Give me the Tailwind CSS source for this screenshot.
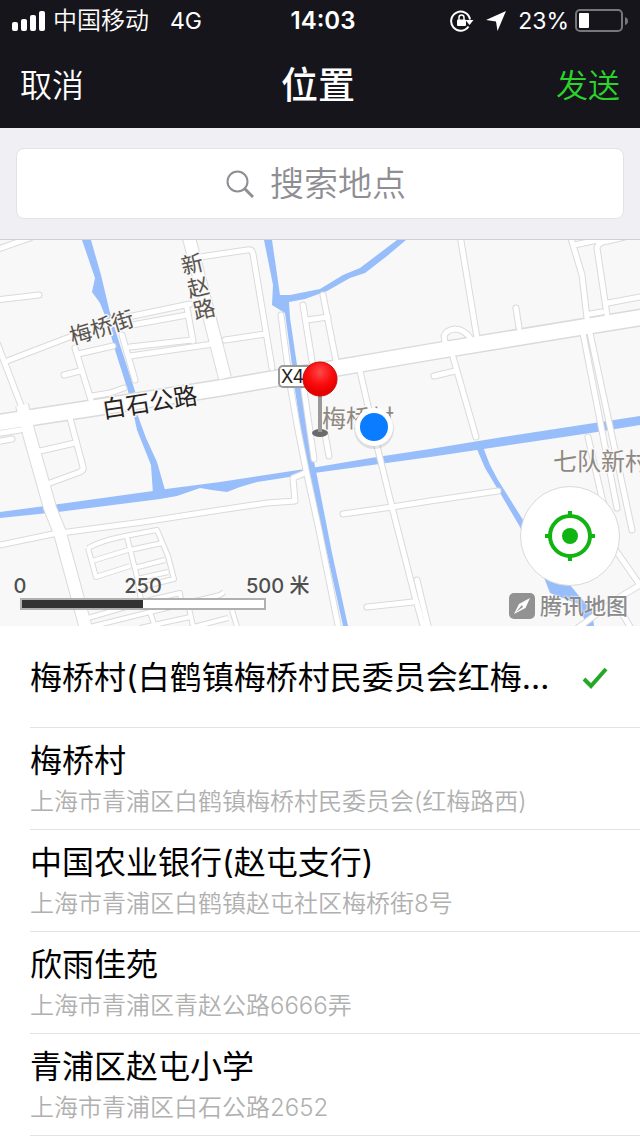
<!DOCTYPE html>
<html lang="zh-CN">
  <head>
    <meta charset="UTF-8" />
    <meta name="viewport" content="width=device-width, initial-scale=1.0" />
    <title>位置</title>
    <script src="https://cdn.jsdelivr.net/npm/@tailwindcss/browser@4"></script>
  </head>
  <body class="bg-white font-['Inter','Noto_Sans_CJK_SC',sans-serif] text-black">
    <header class="bg-[#16151b] text-white">
      <!-- Status bar -->
      <div class="grid h-10 grid-cols-[1fr_auto_1fr] items-center px-3 pt-0.5 text-2xl">
        <div class="flex items-center gap-[7px]">
          <svg class="h-5 w-[34px]" viewBox="0 0 34 20" fill="currentColor">
            <rect x="0" y="11" width="6" height="9" rx="2" />
            <rect x="9" y="8" width="6" height="12" rx="2" />
            <rect x="18" y="4" width="6" height="16" rx="2" />
            <rect x="27" y="0" width="6" height="20" rx="2" />
          </svg>
          <span class="font-[350]">中国移动</span>
          <span class="pl-3.5 text-[23px]">4G</span>
        </div>
        <time class="pl-1.5 font-semibold">14:03</time>
        <div class="flex items-center justify-end">
          <svg class="h-6 w-6 shrink-0" viewBox="0 0 24 24" fill="none" stroke="currentColor" stroke-width="2">
            <path d="M18.500 17.500A9.500 9.500 0 1 1 20 10.500" />
            <path d="M15.500 11h8l-4 5z" fill="currentColor" stroke="none" />
            <rect x="7" y="10.500" width="9" height="6.500" rx="1" fill="currentColor" stroke="none" />
            <path d="M9 11V8.500a2.500 2.500 0 0 1 5 0V11" stroke-width="1.500" />
          </svg>
          <svg class="ml-3 size-5 shrink-0" viewBox="0 0 20 20" fill="currentColor">
            <path d="M20 0L11.500 20L10 10.500L0 9z" />
          </svg>
          <span class="ml-3 text-[23px]">23%</span>
          <svg class="ml-1.5 h-6 w-[53px] shrink-0" viewBox="0 0 53 24" fill="none">
            <rect x="1" y="1" width="46" height="21" rx="4" stroke="#77767b" stroke-width="2" />
            <rect x="4" y="4" width="10" height="15" rx="1" fill="#fff" />
            <path d="M50 8q3 1 3 4t-3 4z" fill="#77767b" />
          </svg>
        </div>
      </div>

      <!-- Title bar -->
      <div class="grid h-[88px] grid-cols-[1fr_auto_1fr] items-center px-5 pt-1">
        <button class="justify-self-start text-[32px] font-[350]">取消</button>
        <h1 class="-ml-1 text-[37px] font-medium">位置</h1>
        <button class="justify-self-end text-[32px] font-[350] text-[#2bd32b]">发送</button>
      </div>
    </header>

    <!-- Search -->
    <div class="border-b border-[#cfcfd8] bg-[#efeff4] px-4 pt-5 pb-5">
      <label for="search" class="flex h-[71px] items-center justify-center gap-4 rounded-lg border border-[#e2e2e8] bg-white">
        <svg class="-ml-2 h-7 w-7" viewBox="0 0 28 28" fill="none" stroke="#8e8e93" stroke-width="2">
          <circle cx="11.500" cy="11.500" r="10" />
          <path d="M18.500 18.500L27 27" stroke-width="3" />
        </svg>
        <input
          id="search"
          type="text"
          placeholder="搜索地点"
          class="w-[136px] text-[34px] font-[350] placeholder:text-[#8e8e93] focus:outline-none"
        />
      </label>
    </div>

    <!-- Map -->
    <section class="relative overflow-hidden bg-[#f8f8f8]">
      <svg class="block w-full" viewBox="0 240 640 386" stroke-linejoin="round">
        <defs>
          <path id="highway" d="M-10 424L100 407L220 388L430 352L650 316" />
          <g id="streets">
            <path d="M22 405L28 430L50 508L60 533L88 636" />
            <path d="M187 230L225 378" />
          </g>
          <g id="lanes">
            <path d="M-4 340L4 361L22 408" />
            <path d="M-5 250L30 238M-5 300L39 295" />
            <path d="M7 361L67 338L123 318L190 304" />
            <path d="M132 325L187 315M187 308L193 341M130 347L192 340M130 356L213 344M78 354L113 346" />
            <path d="M75 348L91 400M64 375L80 371M122 335L135 380M92 396L110 393L124 388" />
            <path d="M200 257L247 250Q252 249 253 254L272 368M225 340L265 334" />
            <path d="M70 418L83 467Q84 470 80 472L50 483M40 451L75 443M-4 442L12 439M-4 434L20 430" />
            <path d="M-5 546L53 534L143 522L220 510L267 503L295 501L293 478L305 473" />
            <path d="M281 315L287 361L291 390L298 430L306 470L319 530L341 640" />
            <path d="M303 305L312 361M304 390L314 459M323 295L336 361M307 320L328 317M325 434L329 456" />
            <path d="M360 371L378 450L392 507L415 597L426 636" />
            <path d="M343 514L392 507L430 501L498 491M367 607L413 602" />
            <path d="M460 235L477 338M445 342L444 336Q446 330 455 329Q464 329 471 339M516 308L519 328" />
            <path d="M570 235L582 275L587 318M574 245L598 240M590 314L602 312" />
            <path d="M607 315L597 248Q598 242 608 241L645 232M608 303L645 296" />
            <path d="M583 333L603 436L617 508M590 333L612 436L632 530M588 437L602 498L608 516" />
            <path d="M453 357L476 437M434 376L455 371" />
            <path d="M612 545L640 585L620 597L575 630M617 605L632 630M417 580L429 630" />
          </g>
          <g id="alleys">
            <path d="M88 548Q100 541 125 536L157 530L168 556L174 579L137 588" />
            <path d="M88 548L96 577L130 566M127 537L137 577L141 600M92 561L128 550M130 550L162 543M134 568L165 560M137 579L168 572" />
            <path d="M88 618L150 600L180 593L181 600M90 627L150 612L220 595L224 592" />
            <path d="M150 612L156 630M188 604L194 630M232 610L238 630M190 628L228 618M140 628L190 617" />
          </g>
        </defs>

        <!-- Rivers -->
        <g class="fill-[#97bdfb]">
          <path d="M82 240L91 240L101 275L110 313L120 345L135 391L138 416L146 438L157 462L165 490L153 494L151 465L137 430L134 416L128 391L115 350L106 318L100 303L92 292L95 278z" />
          <path d="M0 512L45 506L153 491L166 489L220 482L305 469L377 457L430 449L503 437L640 416L640 425L597 432L430 457L307 474L283 478L257 482L240 487L227 492L212 490L200 488L177 496L160 499L58 512L0 518z" />
          <path d="M264 240L272 240L280 295L290 295L320 289L343 275L360 268L397 240L406 240L387 256L365 273L350 278L327 291L305 299L289 302L290 318L297 365L301 390L309 438L317 476L332 553L348 626L343 626L327 553L305 470L302 438L295 390L292 365L285 313L272 305L273 285z" />
          <path d="M476 447L483 447L490 465L498 480L523 520L550 560L570 585L580 597L592 610L594 626L587 626L578 604L550 593L545 580L520 527L503 498L485 468z" />
        </g>

        <!-- Roads: casing first, then the white surface -->
        <g fill="none" stroke="#dadada">
          <use href="#alleys" stroke-width="6" />
          <use href="#lanes" stroke-width="7" stroke-linecap="round" />
          <use href="#streets" stroke-width="14" />
          <use href="#highway" stroke-width="18" />
        </g>
        <g fill="none" stroke="#fff">
          <use href="#alleys" stroke-width="4" />
          <use href="#lanes" stroke-width="5" stroke-linecap="round" />
          <use href="#streets" stroke-width="12" />
          <use href="#highway" stroke-width="15" />
        </g>

        <!-- Place names -->
        <g text-anchor="middle" font-size="22" stroke="#f8f8f8" stroke-width="3" paint-order="stroke" fill="#59544e">
          <text transform="translate(104 335) rotate(-17)">梅桥街</text>
          <g>
            <text transform="translate(194 272) rotate(-13)">新</text>
            <text transform="translate(200 295) rotate(-13)">赵</text>
            <text transform="translate(206 317) rotate(-13)">路</text>
          </g>
          <text transform="translate(151 411) rotate(-9)" font-size="24" fill="#26231f">白石公路</text>
          <text x="601" y="470" font-size="24" fill="#8f8880">七队新村</text>
          <text x="358" y="427" font-size="24" fill="#8f8880">梅桥村</text>
        </g>

        <!-- Road number -->
        <rect x="279" y="366" width="46" height="21" rx="4" fill="#fff" stroke="#999" stroke-width="2" />
        <text x="281" y="383" font-size="18" fill="#222">X4</text>

        <!-- Current position -->
        <circle cx="374" cy="429" r="20" class="fill-black/10" />
        <circle cx="374" cy="427" r="19" fill="#fff" />
        <circle cx="374" cy="427" r="14" fill="#0a7cff" />

        <!-- Pin -->
        <radialGradient id="ball" cx="0.500" cy="0.300" r="0.600">
          <stop offset="0" stop-color="#ff4a4a" />
          <stop offset="0.600" stop-color="#fb0d0d" />
          <stop offset="1" stop-color="#e60000" />
        </radialGradient>
        <ellipse cx="320" cy="433" rx="8" ry="4" fill="#6b6b6b" />
        <path d="M320 394V432" stroke="#999" stroke-width="4" />
        <circle cx="320" cy="379" r="17" fill="url(#ball)" stroke="#c80808" stroke-width="1" />
      </svg>

      <!-- Scale -->
      <div class="absolute bottom-4 left-5 w-[246px] font-medium text-[#4f4f4f]">
        <div class="relative h-6 text-xl leading-6">
          <span class="absolute left-0 -translate-x-1/2">0</span>
          <span class="absolute left-1/2 -translate-x-1/2">250</span>
          <span class="absolute left-full -ml-5 whitespace-nowrap">500 米</span>
        </div>
        <div class="h-3 border-2 border-[#b0b0b0] bg-white">
          <div class="h-full w-1/2 bg-[#333]"></div>
        </div>
      </div>

      <!-- Locate button -->
      <button
        aria-label="定位"
        class="absolute right-5 bottom-10 flex size-[100px] items-center justify-center rounded-full border border-[#d9d9d9] bg-white"
      >
        <svg class="size-[50px]" viewBox="0 0 50 50" fill="none" stroke="#11b411" stroke-width="4">
          <circle cx="25" cy="25" r="20" />
          <path d="M25 0v6M25 44v6M0 25h6M44 25h6" />
          <circle cx="25" cy="25" r="8" fill="#11b411" stroke="none" />
        </svg>
      </button>

      <!-- Map provider -->
      <div class="absolute right-3 bottom-1 flex items-center gap-1 text-[22px] leading-8 font-medium text-[#8b8b8b]">
        <svg class="size-[26px]" viewBox="0 0 26 26">
          <rect width="26" height="26" rx="5" fill="#929292" />
          <path d="M21 5L16.500 15L5 21L10 11z" fill="#fff" />
          <path d="M7 19L13 12L14 14z" fill="#929292" />
        </svg>
        <span class="pl-px [text-shadow:0_0_2px_#fff,0_0_2px_#fff]">腾讯地图</span>
      </div>
    </section>

    <!-- Places -->
    <ul class="pl-[30px]">
      <li class="border-b border-[#e3e3e3]">
        <button class="flex h-[101px] w-full items-center pt-0.5 pr-8 text-left">
          <span class="min-w-0 flex-1 truncate text-[32px] leading-[44px]">梅桥村(白鹤镇梅桥村民委员会红梅路西)</span>
          <svg class="ml-4 h-6 w-[26px] shrink-0" viewBox="0 0 26 24" fill="none" stroke="#25a825" stroke-width="4">
            <path d="M2 13L9 20L24 3" />
          </svg>
        </button>
      </li>
      <li class="border-b border-[#e3e3e3]">
        <button class="flex w-full flex-col gap-[5px] pt-[11px] pb-[13px] text-left">
          <span class="text-[32px] leading-[44px]">梅桥村</span>
          <span class="text-2xl leading-7 font-[350] text-[#b0b0b0]">上海市青浦区白鹤镇梅桥村民委员会(红梅路西)</span>
        </button>
      </li>
      <li class="border-b border-[#e3e3e3]">
        <button class="flex w-full flex-col gap-[5px] pt-[11px] pb-[13px] text-left">
          <span class="text-[32px] leading-[44px]">中国农业银行(赵屯支行)</span>
          <span class="text-2xl leading-7 font-[350] text-[#b0b0b0]">上海市青浦区白鹤镇赵屯社区梅桥街8号</span>
        </button>
      </li>
      <li class="border-b border-[#e3e3e3]">
        <button class="flex w-full flex-col gap-[5px] pt-[11px] pb-[13px] text-left">
          <span class="text-[32px] leading-[44px]">欣雨佳苑</span>
          <span class="text-2xl leading-7 font-[350] text-[#b0b0b0]">上海市青浦区青赵公路6666弄</span>
        </button>
      </li>
      <li class="border-b border-[#e3e3e3]">
        <button class="flex w-full flex-col gap-[5px] pt-[11px] pb-[13px] text-left">
          <span class="text-[32px] leading-[44px]">青浦区赵屯小学</span>
          <span class="text-2xl leading-7 font-[350] text-[#b0b0b0]">上海市青浦区白石公路2652</span>
        </button>
      </li>
    </ul>
  </body>
</html>
